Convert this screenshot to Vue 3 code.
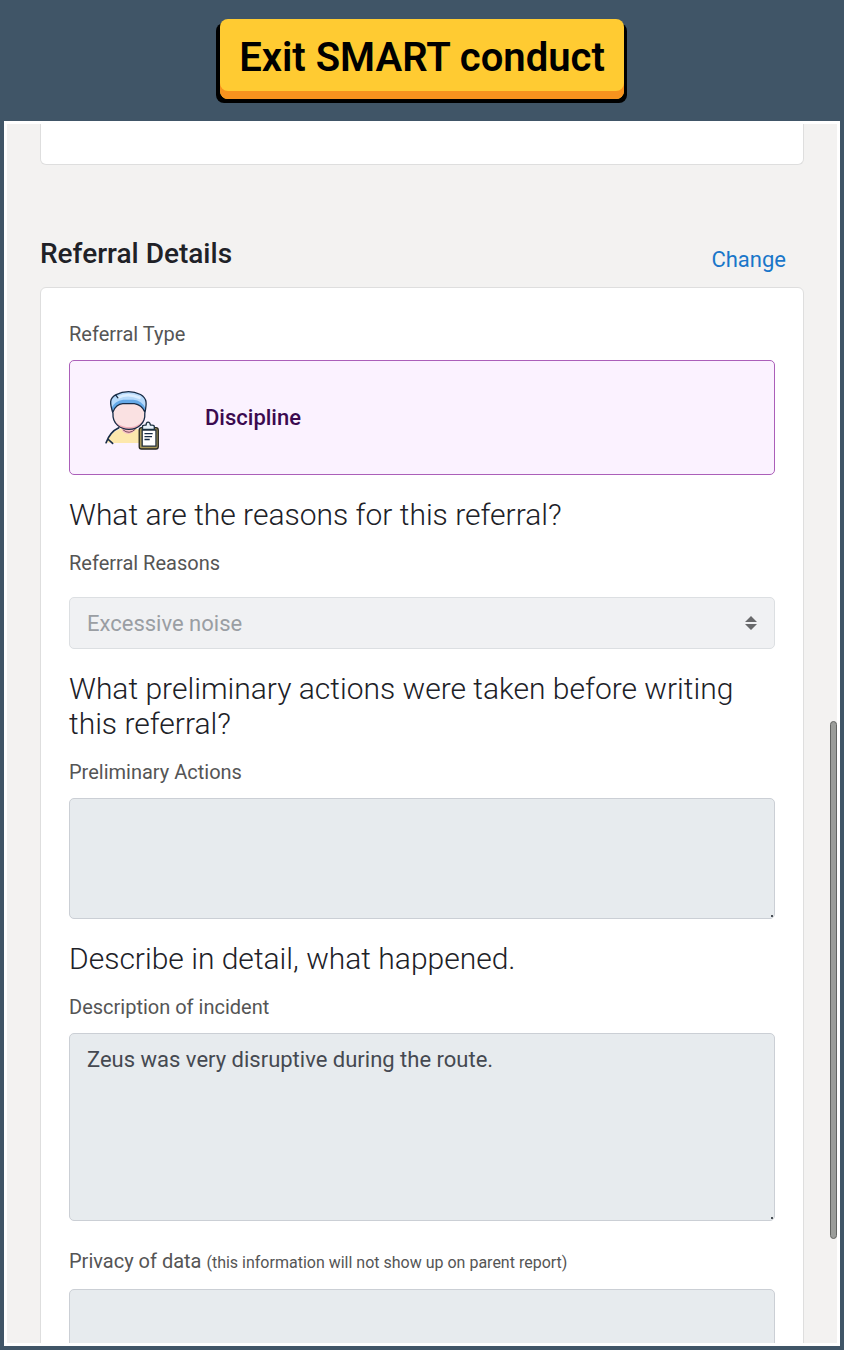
<template>
  <div class="page">
    <header class="topbar">
      <button type="button" class="exit-button">Exit SMART conduct</button>
    </header>

    <main class="frame">
      <div class="frame-content">
        <section class="card previous-card"></section>

        <div class="section-header">
          <h1>Referral Details</h1>
          <a href="#change">Change</a>
        </div>

        <form class="card details-card" @submit.prevent>
          <p id="type-label" class="label">Referral Type</p>
          <button type="button" class="type-option" aria-describedby="type-label">
            <svg class="type-icon" viewBox="42 30 168 198" aria-hidden="true">
              <path d="M50 205C57 182 73 168 98 161L135 161L158 172V207H63Z" fill="#fde8ad" />
              <path d="M47 206C55 183 66 169 86 160M54 196L67 208" fill="none" stroke="#182c46" stroke-width="5" stroke-linecap="round" />
              <path d="M95 156L97 172Q116 187 134 170V154Z" fill="#f7bfc8" />
              <path d="M98 166Q117 183 137 164" fill="none" stroke="#754b58" stroke-width="3" />
              <path d="M69 111C60 87 56 71 77 60Q115 41 151 59C173 71 169 89 163 111Q155 89 133 87H96Q76 89 69 111Z" fill="#b5d9fb" />
              <path d="M69 122C67 84 81 87 115 87S162 84 164 122C163 176 68 176 69 122Z" fill="#fae1e2" />
              <path d="M72 135C80 159 139 172 161 135C152 176 82 179 72 135Z" fill="#efadb8" />
              <path d="M67 112Q76 88 96 86H133Q155 88 165 112L167 101Q156 77 130 75H99Q73 79 63 101Z" fill="#64a9e8" />
              <path d="M84 68Q114 53 149 69" fill="none" stroke="#dceeff" stroke-width="8" stroke-linecap="round" />
              <path d="M68 116C58 84 57 71 76 60Q115 41 152 59C173 71 171 88 165 116C170 181 64 182 68 116M68 112Q77 89 98 87H133Q156 91 165 112M76 60L83 69" fill="none" stroke="#182c46" stroke-width="4" stroke-linecap="round" stroke-linejoin="round" />
              <rect x="148" y="160" width="58" height="65" rx="7" fill="#aa9a5b" stroke="#24251f" stroke-width="4" />
              <path d="M157 167H199V216H157Z" fill="#fff" stroke="#24303d" stroke-width="4" />
              <path d="M158 165V156Q158 152 165 152H169Q169 143 175 143T182 152H187Q194 152 194 157V165Z" fill="#eaf3fb" stroke="#1c3040" stroke-width="4" stroke-linejoin="round" />
              <path d="M164 178H189M164 187H187M164 196H180" stroke="#182c46" stroke-width="4" />
            </svg>
            <span>Discipline</span>
          </button>

          <h2>What are the reasons for this referral?</h2>
          <label class="label" for="reasons">Referral Reasons</label>
          <div class="select-wrap">
            <select id="reasons" v-model="reason" disabled>
              <option>Excessive noise</option>
            </select>
            <svg class="select-arrows" viewBox="0 0 12 14" aria-hidden="true">
              <path d="M0 6L6 0L12 6ZM0 8L6 14L12 8Z" fill="#68696b" />
            </svg>
          </div>

          <h2>What preliminary actions were taken before writing this referral?</h2>
          <label class="label" for="actions">Preliminary Actions</label>
          <textarea id="actions" v-model="actions" class="actions-box" readonly></textarea>

          <h2>Describe in detail, what happened.</h2>
          <label class="label" for="description">Description of incident</label>
          <textarea id="description" v-model="description" class="description-box" readonly></textarea>

          <label class="label privacy-label" for="privacy">
            Privacy of data <small>(this information will not show up on parent report)</small>
          </label>
          <textarea id="privacy" v-model="privacy" class="description-box" readonly></textarea>
        </form>
      </div>
      <div class="scroll-thumb"></div>
    </main>
  </div>
</template>

<script setup>
import { ref } from 'vue';

const reason = ref('Excessive noise');
const actions = ref('');
const description = ref('Zeus was very disruptive during the route.');
const privacy = ref('');
</script>

<style>
body {
  margin: 0;
}
</style>

<style scoped>
* {
  box-sizing: border-box;
}

.page {
  display: flex;
  flex-direction: column;
  height: 100vh;
  padding: 0 4px 4px;
  background: #405567;
  color: #202127;
  font-family: Roboto, "Liberation Sans", sans-serif;
}

.topbar {
  display: flex;
  flex: none;
  justify-content: center;
  padding: 19px 0 22px;
}

.exit-button {
  padding: 15px 19px 18px;
  border: 0;
  border-radius: 8px;
  background: #ffcb32;
  box-shadow: inset 0 -8px #f7931e, -4px 4px #000, 3px 4px #000;
  color: #000;
  font: 600 40px/47px Roboto, "Liberation Sans", sans-serif;
  cursor: pointer;
}

.frame {
  position: relative;
  flex: 1;
  min-height: 0;
  border: 3px solid #fff;
  background: #f3f2f1;
  overflow: hidden;
}

.frame-content {
  height: 100%;
  padding: 0 33px;
  overflow: hidden;
}

.card {
  border: 1px solid #dedede;
  border-radius: 6px;
  background: #fff;
}

.previous-card {
  height: 41px;
  border-top: 0;
  border-radius: 0 0 6px 6px;
}

.section-header {
  display: flex;
  align-items: flex-end;
  justify-content: space-between;
  padding: 71px 18px 12px 0;
}

h1 {
  margin: 0 0 3px;
  font-size: 28px;
  font-weight: 500;
  line-height: 36px;
}

a {
  color: #1976c9;
  font-size: 22px;
  line-height: 30px;
  text-decoration: none;
}

.details-card {
  padding: 31px 28px;
}

.label {
  display: block;
  margin: 0 0 11px;
  color: #555;
  font-size: 20px;
  line-height: 30px;
}

h2 {
  margin: 22px 0 16px;
  font-size: 30px;
  font-weight: 300;
  line-height: 35px;
}

.type-option {
  display: flex;
  align-items: center;
  gap: 45px;
  width: 100%;
  padding: 24px 34px;
  border: 1px solid #ab5fb9;
  border-radius: 5px;
  background: #fbf2ff;
  color: #3b0a50;
  font: 500 22px/30px Roboto, "Liberation Sans", sans-serif;
}

.type-icon {
  width: 56px;
  height: 65px;
}

.select-wrap {
  position: relative;
  margin-top: 19px;
}

select {
  display: block;
  width: 100%;
  height: 52px;
  padding: 0 17px;
  border: 1px solid #dcdfe2;
  border-radius: 5px;
  appearance: none;
  background: #f0f1f3;
  color: #9a9ea3;
  font: 22px Roboto, "Liberation Sans", sans-serif;
  opacity: 1;
}

.select-arrows {
  position: absolute;
  top: 50%;
  right: 18px;
  width: 12px;
  height: 14px;
  transform: translateY(-50%);
  pointer-events: none;
}

textarea {
  display: block;
  width: 100%;
  padding: 10px 17px;
  border: 1px solid #cbcfd5;
  border-radius: 5px;
  background: linear-gradient(#4a5056, #4a5056) right 1px bottom 1px / 2px 2px no-repeat #e7ebee;
  color: #454951;
  font: 22px/32px Roboto, "Liberation Sans", sans-serif;
  outline: none;
  resize: none;
}

.actions-box {
  height: 121px;
}

.description-box {
  height: 188px;
}

.privacy-label {
  margin-top: 25px;
}

small {
  font-size: 16px;
}

.scroll-thumb {
  position: absolute;
  top: 49%;
  right: 0;
  width: 7px;
  height: 42.5%;
  border: 1px solid #626462;
  border-radius: 4px;
  background: #9b9d9a;
}
</style>
